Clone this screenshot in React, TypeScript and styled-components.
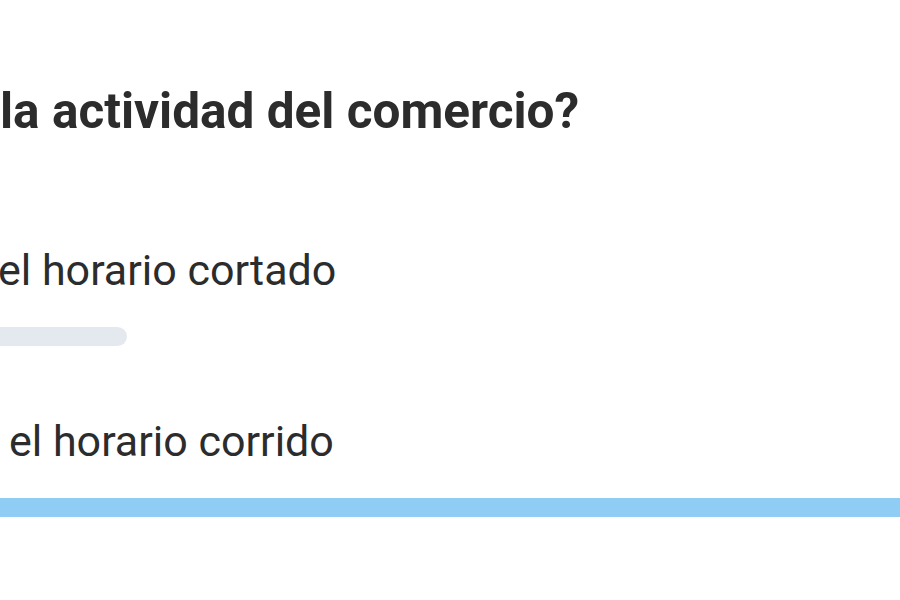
import styled, { createGlobalStyle } from 'styled-components';

const GlobalStyle = createGlobalStyle`
  html, body {
    margin: 0;
    padding: 0;
    background: #ffffff;
  }
  body {
    font-family: Roboto, 'Liberation Sans', Arial, sans-serif;
    overflow: hidden;
  }
`;

const Poll = styled.section`
  width: 900px;
  height: 600px;
  overflow: hidden;
  padding-top: 81px;
  box-sizing: border-box;
  color: #2c2c2c;
`;

const Question = styled.h2`
  margin: 0;
  font-size: 49.5px;
  line-height: 60px;
  font-weight: 700;
  white-space: nowrap;
`;

const Options = styled.div`
  display: flex;
  flex-direction: column;
  gap: 70px;
  margin-top: 104px;
`;

const Option = styled.div`
  display: flex;
  flex-direction: column;
  gap: 32px;
`;

const Label = styled.span<{ $shift: number }>`
  font-size: 43px;
  line-height: 50px;
  font-weight: 400;
  white-space: nowrap;
  margin-left: ${(p) => p.$shift}px;
`;

const Track = styled.div`
  height: 19px;
  margin: 0 -30px 0 -20px;
`;

const Fill = styled.div<{ $color: string }>`
  height: 100%;
  background: ${(p) => p.$color};
  border-radius: 0 10px 10px 0;
`;

const options = [
  { label: 'el horario cortado', shift: -2, pct: 15.5, color: '#e4e9f0' },
  { label: 'el horario corrido', shift: 9, pct: 100, color: '#8fcdf4' },
];

export default function App() {
  return (
    <>
      <GlobalStyle />
      <Poll>
        <Question>la actividad del comercio?</Question>
        <Options>
          {options.map((o) => (
            <Option key={o.label}>
              <Label $shift={o.shift}>{o.label}</Label>
              <Track>
                <Fill $color={o.color} style={{ width: `${o.pct}%` }} />
              </Track>
            </Option>
          ))}
        </Options>
      </Poll>
    </>
  );
}
